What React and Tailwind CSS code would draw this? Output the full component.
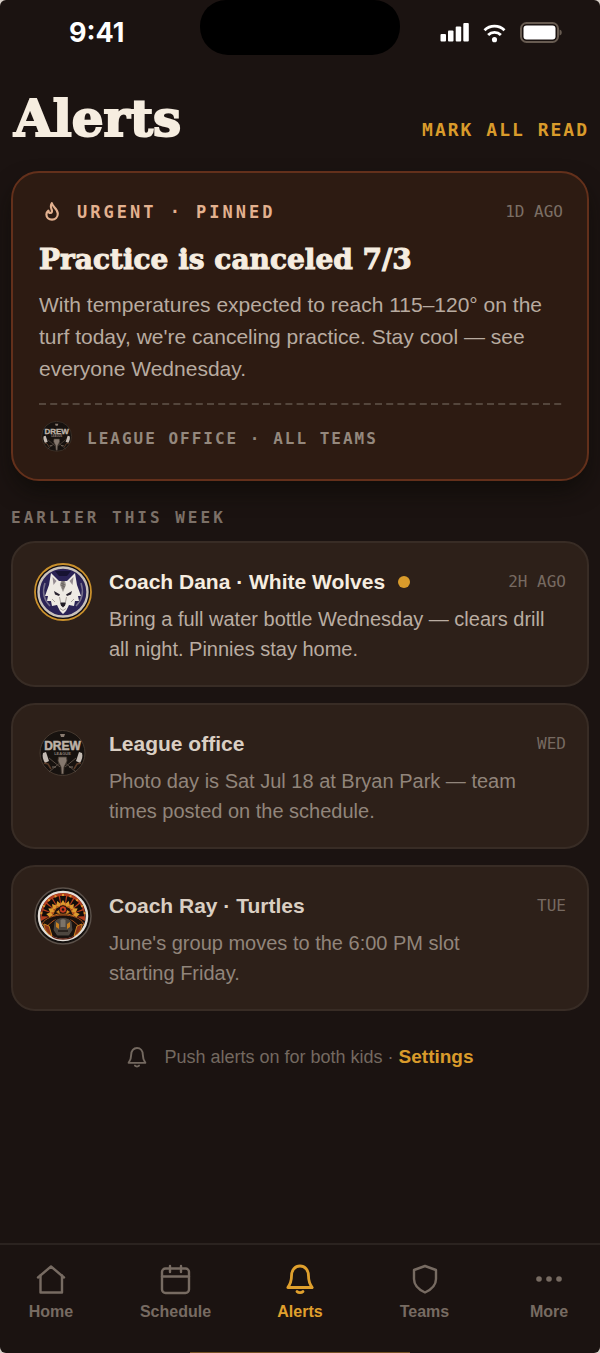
import { useState } from 'react'

const MONO = "font-['DejaVu_Sans_Mono','Liberation_Mono',monospace]"
const SERIF = "font-['DejaVu_Serif','Liberation_Serif',serif]"

const ALERTS = [
  {
    id: 'wolves',
    title: 'Coach Dana · White Wolves',
    body: 'Bring a full water bottle Wednesday — clears drill all night. Pinnies stay home.',
    time: '2H AGO',
    logo: WolfLogo,
    unread: true,
  },
  {
    id: 'league',
    title: 'League office',
    body: 'Photo day is Sat Jul 18 at Bryan Park — team times posted on the schedule.',
    time: 'WED',
    logo: DrewLogo,
    unread: false,
  },
  {
    id: 'turtles',
    title: 'Coach Ray · Turtles',
    body: "June's group moves to the 6:00 PM slot starting Friday.",
    time: 'TUE',
    logo: TurtleLogo,
    unread: false,
  },
]

const TABS = [
  { name: 'Home', icon: HomeIcon },
  { name: 'Schedule', icon: CalendarIcon },
  { name: 'Alerts', icon: BellIcon },
  { name: 'Teams', icon: ShieldIcon },
  { name: 'More', icon: DotsIcon },
]

export default function App() {
  const [tab, setTab] = useState('Alerts')

  return (
    <div className="bg-[#d8d0c9]">
      <div className="relative flex min-h-screen flex-col overflow-hidden rounded-[6px] bg-[#1b1311] font-['Liberation_Sans',Arial,sans-serif] text-[#f6ede0]">
        <StatusBar />

        <main className="flex flex-1 flex-col px-[11px] pt-[23px]">
          <header className="flex items-baseline justify-between pl-[3px]">
            <h1 className={`${SERIF} text-[50px] leading-[60px] font-bold [-webkit-text-stroke:2px_currentColor]`}>
              Alerts
            </h1>
            <button type="button" className={`${MONO} text-[18px] font-bold tracking-[2px] text-[#d99b2b]`}>
              MARK ALL READ
            </button>
          </header>

          <PinnedCard />

          <h2 className={`${MONO} mt-[25px] mb-[11px] text-[16px] leading-[24px] font-bold tracking-[3px] text-[#7c7067]`}>
            EARLIER THIS WEEK
          </h2>

          <div className="flex flex-col gap-4">
            {ALERTS.map((alert) => (
              <AlertCard key={alert.id} alert={alert} />
            ))}
          </div>

          <div className="mt-8 flex items-center justify-center gap-4 text-[18px] leading-[28px] text-[#746960]">
            <BellIcon size={22} />
            <p>
              Push alerts on for both kids ·{' '}
              <a href="#settings" className="text-[19px] font-bold text-[#d99b2b]">Settings</a>
            </p>
          </div>
        </main>

        <nav className="flex justify-between border-t-2 border-[#2b2320] px-[3px] pt-[18px] pb-[31px]">
          {TABS.map(({ name, icon: Icon }) => (
            <button
              key={name}
              type="button"
              onClick={() => setTab(name)}
              className={`flex w-24 flex-col items-center gap-[7px] text-[16px] leading-[20px] font-bold ${
                tab === name ? 'text-[#e0a02d]' : 'text-[#776b62]'
              }`}
            >
              <Icon size={32} />
              {name}
            </button>
          ))}
        </nav>
        {/* top edge of the home indicator */}
        <div className="absolute bottom-0 left-1/2 h-px w-[220px] -translate-x-1/2 bg-[#765226]" />
      </div>
    </div>
  )
}

function StatusBar() {
  return (
    <div className="flex h-[66px] items-center justify-between pr-[37px] pl-[69px] text-white">
      <span className="font-['Inter',sans-serif] text-[27px] leading-[32px] font-bold">9:41</span>
      <div className="absolute top-0 left-1/2 h-[55px] w-[200px] -translate-x-1/2 rounded-t-[26px] rounded-b-[28px] bg-black" />
      <div className="flex items-center gap-[13px]">
        <svg width="30" height="20" viewBox="0 0 30 20" fill="currentColor">
          <rect x="0.5" y="11" width="5.500" height="7.500" rx="1" />
          <rect x="8" y="7.500" width="5.500" height="11" rx="1" />
          <rect x="15.700" y="3.500" width="5.500" height="15" rx="1" />
          <rect x="23.300" y="0" width="5.500" height="18.500" rx="1" />
        </svg>
        <svg width="23" height="19" viewBox="0 0 24 20" fill="none" stroke="currentColor" strokeWidth="3">
          <path d="M1.500 6.500a15 15 0 0 1 21 0" />
          <path d="M5.300 11.500a9.600 9.600 0 0 1 13.400 0" />
          <circle cx="12" cy="16.500" r="2.700" fill="currentColor" stroke="none" />
        </svg>
        <svg width="44" height="22" viewBox="0 0 44 22">
          <rect x="2" y="1" width="37" height="19" rx="5.500" fill="none" stroke="#675b51" strokeWidth="2" />
          <rect x="4.500" y="3.500" width="32" height="14" rx="3" fill="#fff" />
          <path d="M40.500 7.500c3 .6 3 5.400 0 6z" fill="#675b51" />
        </svg>
      </div>
    </div>
  )
}

function PinnedCard() {
  return (
    <article className="mt-[22px] rounded-[28px] border-2 border-[#63301b] bg-[#2d1b12] py-[26px] pr-6 pl-[26px] shadow-[0_12px_24px_-4px_rgba(10,10,5,0.7)]">
      <div className="flex items-center justify-between">
        <div className="flex items-center gap-4 pl-1 text-[#e3b18f]">
          <FlameIcon />
          <span className={`${MONO} text-[17px] leading-[26px] font-bold tracking-[3px]`}>URGENT · PINNED</span>
        </div>
        <time className={`${MONO} text-[16px] leading-[24px] text-[#7c6f65]`}>1D AGO</time>
      </div>
      <h2 className={`${SERIF} mt-[17px] text-[28px] leading-[36px] font-bold [-webkit-text-stroke:1px_currentColor]`}>
        Practice is canceled 7/3
      </h2>
      <p className="mt-[11px] text-[21px] leading-[32px] text-[#b8aba0]">
        With temperatures expected to reach 115–120° on the turf today, we're canceling practice. Stay cool — see
        everyone Wednesday.
      </p>
      <svg width="100%" height="2" className="mt-[18px] block">
        <line x1="0" y1="1" x2="100%" y2="1" stroke="#54463c" strokeWidth="2" strokeDasharray="7 4.2" />
      </svg>
      <div className="mt-4 flex h-8 items-center gap-[14px] pl-[2px]">
        <DrewLogo size={32} />
        <span className={`${MONO} pt-1 text-[16px] leading-[24px] font-bold tracking-[2px] text-[#94887d]`}>
          LEAGUE OFFICE · ALL TEAMS
        </span>
      </div>
    </article>
  )
}

function AlertCard({ alert }) {
  const Logo = alert.logo
  return (
    <article className="flex gap-[17px] rounded-3xl border-2 border-[#382c25] bg-[#2d2019] px-[21px] pt-5 pb-[21px]">
      <div className="flex size-[58px] shrink-0 items-center justify-center">
        <Logo />
      </div>
      <div className="min-w-0 flex-1 pt-[5px]">
        <div className="flex items-center justify-between">
          <h3
            className={`flex items-center gap-[13px] text-[21px] leading-[28px] font-bold ${
              alert.unread ? 'text-[#f6ede0]' : 'text-[#dacfc3]'
            }`}
          >
            {alert.title}
            {alert.unread && <span className="size-3 rounded-full bg-[#d99b2b]" />}
          </h3>
          <time className={`${MONO} text-[16px] leading-[24px] text-[#776a61]`}>{alert.time}</time>
        </div>
        <p className={`mt-2 text-[20px] leading-[30px] text-pretty ${alert.unread ? 'text-[#baada2]' : 'text-[#91857b]'}`}>
          {alert.body}
        </p>
      </div>
    </article>
  )
}

function FlameIcon() {
  return (
    <svg width="18" height="20" viewBox="0 0 18 20" fill="none" stroke="currentColor" strokeWidth="2.200" strokeLinejoin="round">
      <path d="M8.800 1.200C9.400 5 14.800 6.800 14.800 11.800c0 3.400-2.600 5.800-5.800 5.800s-5.600-2.200-5.600-5.200c0-1.800.8-2.800 2-3.800.2 1.800.8 2.400 1.800 2.400 1.800 0 2.200-1.900 1.300-3.800-.8-2-.9-4 .3-6z" />
    </svg>
  )
}

function HomeIcon({ size }) {
  return (
    <svg width={size} height={size} viewBox="0 0 32 32" fill="none" stroke="currentColor" strokeWidth="2.400" strokeLinecap="round" strokeLinejoin="round">
      <path d="M3 14.500 16 3.500 29 14.500" />
      <path d="M5.500 12.500v17H27v-17" />
    </svg>
  )
}

function CalendarIcon({ size }) {
  return (
    <svg width={size} height={size} viewBox="0 0 32 32" fill="none" stroke="currentColor" strokeWidth="2.400" strokeLinecap="round">
      <rect x="2" y="5.500" width="27" height="24.500" rx="3.500" />
      <path d="M2 13.500h27M10 3v6M21 3v6" />
    </svg>
  )
}

function BellIcon({ size }) {
  return (
    <svg width={size} height={size} viewBox="0 0 32 32" fill="none" stroke="currentColor" strokeWidth="2.800" strokeLinecap="round" strokeLinejoin="round">
      <path d="M7.500 13c0-6 3.600-10 8.500-10s8.500 4 8.500 10c0 6 1.500 8.500 3.700 11.500H3.800C6 21.500 7.500 19 7.500 13z" />
      <path d="M13 28.500c1.500 1.600 4.500 1.600 6 0" />
    </svg>
  )
}

function ShieldIcon({ size }) {
  return (
    <svg width={size} height={size} viewBox="0 0 32 32" fill="none" stroke="currentColor" strokeWidth="2.400" strokeLinejoin="round">
      <path d="M16 3 27 7v9c0 6-4.500 10.500-11 13.500C9.500 26.500 5 22 5 16V7z" />
    </svg>
  )
}

function DotsIcon({ size }) {
  return (
    <svg width={size} height={size} viewBox="0 0 32 32" fill="currentColor">
      <circle cx="6" cy="16" r="2.800" />
      <circle cx="16" cy="16" r="2.800" />
      <circle cx="26" cy="16" r="2.800" />
    </svg>
  )
}

function WolfLogo({ size = 58 }) {
  return (
    <svg width={size} height={size} viewBox="0 0 58 58">
      <circle cx="29" cy="29" r="28" fill="#100c12" stroke="#c9902c" strokeWidth="1.800" />
      <circle cx="29" cy="29" r="24.500" fill="#2b2356" stroke="#c9c2bb" strokeWidth="2.400" />
      <path d="M21 8h16l-4 5h-8z" fill="#171332" />
      <path d="M11 20c-3 9-1 17 5 23M47 20c3 9 1 17-5 23" fill="none" stroke="#77718a" strokeWidth="1.500" />
      {/* head and mane */}
      <path
        d="M17 10l8 8h8l8-8 2 12 4 11-3 0 1 5-4 0-1 5-5-1-3 6-3 3-3-3-3-6-5 1-1-5-4 0 1-5-3 0 4-11z"
        fill="#eeeae4"
      />
      <path d="M18.500 14l4 4-3 4zM39.500 14l-4 4 3 4z" fill="#948b91" />
      <path d="M27 18h4l1 4-3 7-3-7z" fill="#99938f" />
      <path d="M29 18v8M27 20l4 2M31 24l-4-2" stroke="#6a6461" strokeWidth="1" />
      <path d="M20 28l6 3.500-1 1.500-4-1.500zM38 28l-6 3.500 1 1.500 4-1.500z" fill="#29232f" />
      <path d="M26 39.500h6l-1 3-2 2-2-2z" fill="#201b24" />
      <path d="M25.500 34l1 5M32.500 34l-1 5M18 36l3 3M40 36l-3 3M26 45.500l3 2 3-2" fill="none" stroke="#aba39f" strokeWidth="1" />
    </svg>
  )
}

function DrewLogo({ size = 48 }) {
  return (
    <svg width={size} height={size} viewBox="0 0 48 48">
      <circle cx="23.500" cy="23" r="22.500" fill="#17120f" stroke="#46392f" strokeWidth="1" />
      <path d="M21 4h5l-1 3h-3z" fill="#8a7c71" />
      <text
        x="23.500"
        y="19.500"
        textAnchor="middle"
        fontFamily="Liberation Sans, Arial, sans-serif"
        fontSize="12"
        fontWeight="700"
        fill="#bdb2a7"
        stroke="#bdb2a7"
        strokeWidth=".5"
      >
        DREW
      </text>
      <text
        x="23.500"
        y="24.500"
        textAnchor="middle"
        fontFamily="Liberation Sans, Arial, sans-serif"
        fontSize="4"
        fontWeight="700"
        fill="#8a7e74"
      >
        LEAGUE
      </text>
      <path d="M10 28l11 9M37 28l-11 9M10 42l13-11M37 42L24 31" stroke="#574b42" strokeWidth="1" />
      <path d="M19.500 27h8l.5 4-3 6-.5 7h-2l-.5-7-3-6z" fill="#85786e" stroke="#473c34" strokeWidth=".8" />
      <path d="M4 23l3-1 3 9-4 2c-2-3-3-7-2-10zM43 23l-3-1-3 9 4 2c2-3 3-7 2-10z" fill="#c4bbb3" />
      <path d="M5 33l4 1 3 5M42 33l-4 1-3 5" fill="none" stroke="#5a3b28" strokeWidth="1.500" />
      <path d="M13 37h4M30 37h4" stroke="#7d7066" strokeWidth="1.200" />
    </svg>
  )
}

function TurtleLogo({ size = 58 }) {
  const plates = [-80, -60, -40, -20, 0, 20, 40, 60, 80]
  return (
    <svg width={size} height={size} viewBox="0 0 58 58">
      <circle cx="29" cy="29" r="28" fill="#14100e" stroke="#5a5049" strokeWidth="1.500" />
      <circle cx="29" cy="29" r="24" fill="#1a120e" stroke="#e4dfd9" strokeWidth="2.500" />
      {/* shell */}
      <path d="M7 34C5 17 15 6 29 6s24 11 22 28l-9-5c-8-4-18-4-26 0z" fill="#b23d1d" />
      {plates.map((angle) => (
        <g key={angle} transform={`rotate(${angle} 29 30)`}>
          <path d="M26 9h6l-1 7h-4z" fill="#120d0b" />
          <path d="M26.500 17l2.500-4 2.500 4-2.500 3z" fill="#dd9a2e" />
          <path d="M28 7h2v2h-2z" fill="#dd9a2e" />
        </g>
      ))}
      <path d="M18 29l4-8 7-3 7 3 4 8-6-2H24z" fill="#20130e" stroke="#c0701f" strokeWidth="1" />
      <circle cx="29" cy="22.500" r="3.800" fill="#c43b20" stroke="#1d120e" strokeWidth="1" />
      <circle cx="29" cy="22.500" r="1.300" fill="#1d120e" />
      <path d="M22 25l3-2 1 4zM36 25l-3-2-1 4z" fill="#d58a24" />
      <path d="M8 37c6-12 36-12 42 0l-4 3-7-6c-5-3-15-3-20 0l-7 6z" fill="#1a100c" stroke="#a9521d" strokeWidth="1" />
      {/* head and flippers */}
      <path d="M20 35c3-6 15-6 18 0l1 8-4 6H23l-4-6z" fill="#4d463f" stroke="#171210" strokeWidth="1" />
      <path d="M22 35l3 2v5l-3-2zM36 35l-3 2v5l3-2z" fill="#c8801f" />
      <path d="M26.500 33c1-1 4-1 5 0v7h-5z" fill="#7b736a" />
      <path d="M24 44h10" stroke="#211a16" strokeWidth="1.500" />
      <path d="M10 37l5 2 3 10c-5-2-8-7-8-12zM48 37l-5 2-3 10c5-2 8-7 8-12z" fill="#8a3419" stroke="#c9801f" strokeWidth="1" />
      <path d="M18 49c5 4 17 4 22 0" fill="none" stroke="#5c2315" strokeWidth="1.500" />
    </svg>
  )
}
